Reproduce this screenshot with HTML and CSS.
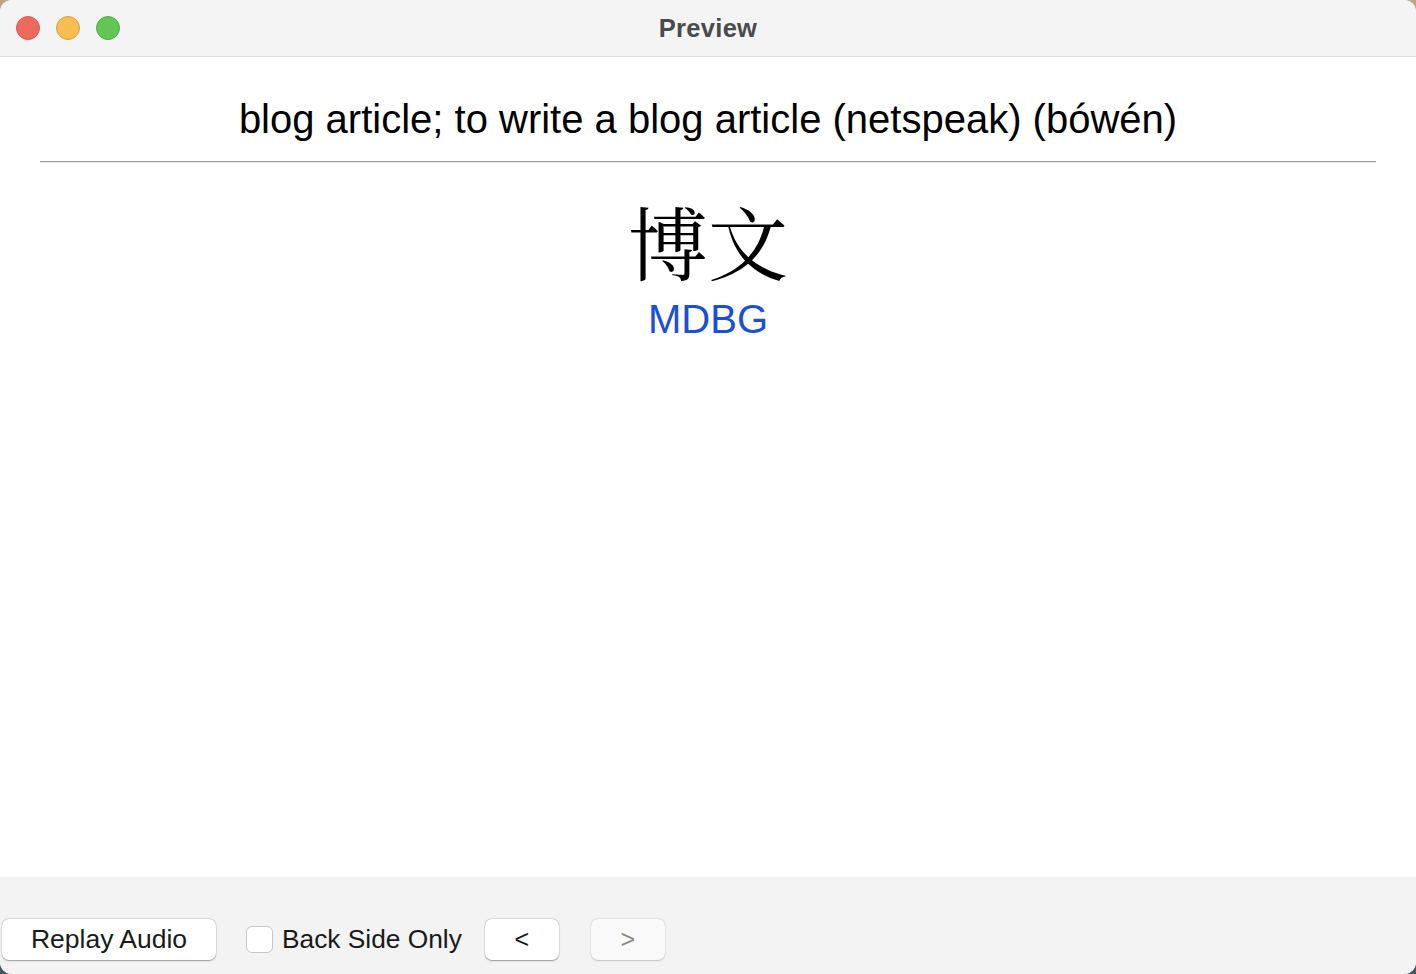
FILE: index.html
```html
<!DOCTYPE html>
<html>
<head>
<meta charset="utf-8">
<link rel="stylesheet" href="styles.css">
</head>
<body>
<div class="window">
  <div class="titlebar">
    <div class="lights">
      <span class="light red"></span>
      <span class="light yellow"></span>
      <span class="light green"></span>
    </div>
    <div class="title">Preview</div>
  </div>
  <div class="content">
    <div class="question">blog article; to write a blog article (netspeak) (bówén)</div>
    <hr class="divider">
    <div class="answer">
      <div class="hanzi">博文</div>
      <div class="link">MDBG</div>
    </div>
  </div>
  <div class="footer">
    <button class="btn replay">Replay Audio</button>
    <label class="check"><span class="box"></span><span>Back Side Only</span></label>
    <button class="btn nav">&lt;</button>
    <button class="btn nav disabled">&gt;</button>
  </div>
</div>
</body>
</html>
```
FILE: styles.css
```css
html, body {
  margin: 0;
  padding: 0;
  width: 1416px;
  height: 974px;
  overflow: hidden;
  background: linear-gradient(180deg, #b9a98a 0%, #8c8a7a 50%, #3e5a5e 100%);
  font-family: "Liberation Sans", Arial, sans-serif;
}
.window {
  width: 1416px;
  height: 974px;
  display: flex;
  flex-direction: column;
  border-radius: 12px;
  overflow: hidden;
  background: #f3f3f3;
}
.titlebar {
  height: 56px;
  flex: none;
  position: relative;
  background: #f4f4f4;
  border-bottom: 1px solid #dedede;
  display: flex;
  align-items: center;
  justify-content: center;
}
.lights {
  position: absolute;
  left: 16px;
  top: 16px;
  display: flex;
  gap: 16px;
}
.light {
  width: 24px;
  height: 24px;
  border-radius: 50%;
  box-sizing: border-box;
}
.red { background: #ee6a5f; border: 1px solid #d95a50; }
.yellow { background: #f5be4f; border: 1px solid #dca23c; }
.green { background: #62c655; border: 1px solid #52ab46; }
.title {
  font-weight: bold;
  font-size: 25.5px;
  color: #4b4b4b;
  letter-spacing: 0.3px;
}
.content {
  flex: 1;
  background: #ffffff;
  display: flex;
  flex-direction: column;
  padding: 0 40px;
}
.question {
  text-align: center;
  font-size: 40px;
  color: #000;
  margin-top: 39px;
  line-height: 46px;
}
.divider {
  margin: 19px 0 0 0;
  border: none;
  border-top: 1px solid #9a9a9a;
  border-bottom: 1px solid #ececec;
  height: 0;
}
.answer {
  display: flex;
  flex-direction: column;
  align-items: center;
  margin-top: 35px;
}
.hanzi {
  font-family: "Noto Serif CJK SC", "Noto Sans CJK SC", serif;
  font-size: 80px;
  line-height: 84px;
  color: #000;
}
.link {
  font-size: 40px;
  color: #1c4fd6;
  line-height: 48px;
  margin-top: 13px;
}
.footer {
  height: 97px;
  flex: none;
  background: #f3f3f3;
  display: flex;
  align-items: flex-start;
  padding: 42px 0 0 2px;
  box-sizing: border-box;
  gap: 0;
}
.btn {
  font-family: "Liberation Sans", Arial, sans-serif;
  height: 41px;
  background: #ffffff;
  border: none;
  border-radius: 7px;
  box-shadow: 0 0.5px 1.5px rgba(0,0,0,0.35), 0 0 0 0.5px rgba(0,0,0,0.08);
  font-size: 26.5px;
  color: #1a1a1a;
  padding: 0;
}
.replay {
  width: 214px;
}
.check {
  display: flex;
  align-items: center;
  height: 41px;
  margin-left: 30px;
  font-size: 26.3px;
  color: #1a1a1a;
  gap: 9px;
}
.box {
  width: 27px;
  height: 27px;
  box-sizing: border-box;
  border: 1px solid #c6c6c6;
  border-radius: 6px;
  background: #fff;
}
.nav {
  width: 74px;
  margin-left: 23px;
  font-size: 25px;
}
.nav.disabled {
  margin-left: 32px;
  background: #f9f9f9;
  color: #8a8a8a;
  box-shadow: 0 0.5px 1.5px rgba(0,0,0,0.18), 0 0 0 0.5px rgba(0,0,0,0.05);
}
```
